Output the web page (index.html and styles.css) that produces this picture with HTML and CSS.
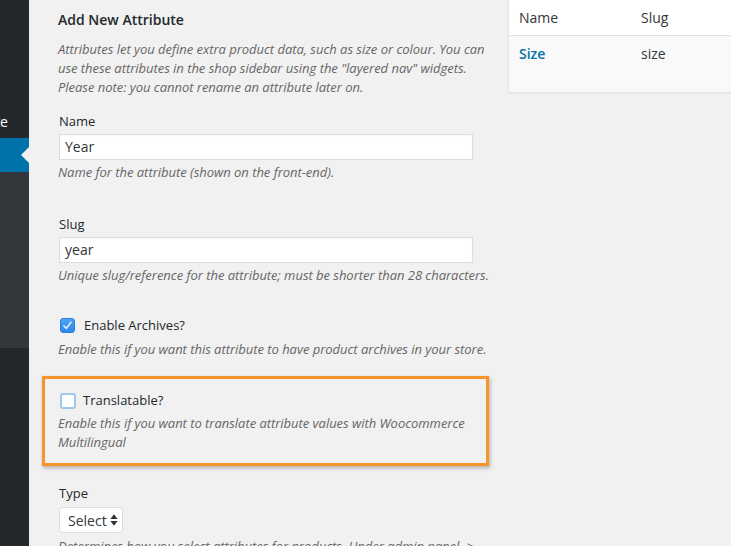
FILE: index.html
```html
<!DOCTYPE html>
<html lang="en">
<head>
<meta charset="utf-8">
<title>Attributes</title>
<link rel="stylesheet" href="styles.css">
</head>
<body>
<div class="page">
  <aside class="sidebar">
    <div class="menu-top"><span class="menu-text">Create</span></div>
    <div class="menu-current"><span class="notch"></span></div>
    <div class="submenu"></div>
    <div class="menu-rest"></div>
  </aside>
  <main class="content">
    <section class="form-col">
      <h2 class="title">Add New Attribute</h2>
      <p class="intro">Attributes let you define extra product data, such as size or colour. You can use these attributes in the shop sidebar using the "layered nav" widgets. Please note: you cannot rename an attribute later on.</p>

      <div class="field field-first">
        <label class="label">Name</label>
        <div class="input">Year</div>
        <p class="desc">Name for the attribute (shown on the front-end).</p>
      </div>

      <div class="field field-next">
        <label class="label">Slug</label>
        <div class="input">year</div>
        <p class="desc nowrap">Unique slug/reference for the attribute; must be shorter than 28 characters.</p>
      </div>

      <div class="field field-check">
        <div class="check-row"><span class="checkbox checked"><svg viewBox="0 0 16 16" width="15" height="15"><path d="M4.2 8.4 L6.8 11 L11.8 4.6" fill="none" stroke="#d8ecff" stroke-width="1.8" stroke-linecap="round" stroke-linejoin="round"/></svg></span><span class="check-label">Enable Archives?</span></div>
        <p class="desc">Enable this if you want this attribute to have product archives in your store.</p>
      </div>

      <div class="highlight">
        <div class="check-row"><span class="checkbox focus"></span><span class="check-label tight">Translatable?</span></div>
        <p class="desc">Enable this if you want to translate attribute values with Woocommerce Multilingual</p>
      </div>

      <div class="field field-type">
        <label class="label">Type</label>
        <div class="select"><span>Select</span><svg class="arrows" viewBox="0 0 8 12" width="8" height="12"><path d="M4 0.3 L7.6 5 L0.4 5 Z M4 11.7 L7.6 7 L0.4 7 Z" fill="#333"/></svg></div>
        <p class="desc nowrap">Determines how you select attributes for products. Under admin panel -&gt;</p>
      </div>
    </section>

    <section class="table-col">
      <div class="thead">
        <div class="cell c-name">Name</div>
        <div class="cell c-slug">Slug</div>
      </div>
      <div class="trow">
        <div class="cell c-name"><a class="link">Size</a></div>
        <div class="cell c-slug">size</div>
      </div>
    </section>
  </main>
</div>
</body>
</html>
```

FILE: styles.css
```css
html, body {
  margin: 0;
  padding: 0;
  background: #f1f1f1;
  overflow: hidden;
}

body {
  font-family: "Open Sans", "Liberation Sans", sans-serif;
  font-size: 13px;
  line-height: 19px;
  color: #23282d;
}

.page {
  display: flex;
  width: 731px;
  height: 546px;
  overflow: hidden;
}

/* Sidebar */
.sidebar {
  width: 29px;
  flex: none;
  display: flex;
  flex-direction: column;
  background: #23282d;
  overflow: hidden;
}

.menu-top {
  height: 138px;
  display: flex;
  align-items: flex-end;
  justify-content: flex-end;
  box-sizing: border-box;
}

.menu-text {
  color: #fff;
  font-size: 14px;
  line-height: 19px;
  margin-bottom: 7px;
  white-space: nowrap;
  margin-right: 21px;
}

.menu-current {
  height: 34px;
  background: #0073aa;
  position: relative;
}

.notch {
  position: absolute;
  right: 0;
  top: 9px;
  width: 0;
  height: 0;
  border-top: 8px solid transparent;
  border-bottom: 8px solid transparent;
  border-right: 8px solid #f1f1f1;
}

.submenu {
  height: 176px;
  background: #32373c;
}

.menu-rest {
  flex: 1;
  background: #23282d;
}

/* Content */
.content {
  flex: 1;
  display: flex;
  padding-left: 29px;
  gap: 19px;
  min-width: 0;
}

.form-col {
  width: 431px;
  flex: none;
}

.title {
  margin: 0;
  padding-top: 10px;
  font-size: 14px;
  line-height: 20px;
  font-weight: 600;
  color: #23282d;
}

.intro {
  margin: 10px 0 0;
  font-style: italic;
  color: #666;
  font-size: 13px;
  line-height: 19px;
  letter-spacing: -0.03px;
}

.field-first { margin-top: 15px; }
.field-next { margin-top: 33px; }
.field-check { margin-top: 31px; }
.field-type { margin-top: 18px; }

.label {
  display: block;
  padding-left: 1px;
  font-size: 13px;
  line-height: 19px;
  color: #23282d;
}

.input {
  margin: 3px 0 0 1px;
  width: 414px;
  height: 26px;
  box-sizing: border-box;
  background: #fff;
  border: 1px solid #ddd;
  box-shadow: inset 0 1px 2px rgba(0, 0, 0, 0.04);
  padding-left: 5px;
  font-size: 14px;
  line-height: 24px;
  color: #32373c;
}

.desc {
  margin: 3px 0 0;
  font-style: italic;
  color: #666;
  font-size: 13px;
  line-height: 19px;
  letter-spacing: -0.03px;
}

.nowrap { white-space: nowrap; }

.check-row {
  display: flex;
  align-items: center;
  height: 19px;
  padding-left: 2px;
}

.checkbox {
  width: 15px;
  height: 15px;
  box-sizing: border-box;
  border-radius: 3px;
  flex: none;
  display: flex;
  align-items: center;
  justify-content: center;
}

.checkbox.checked {
  background: linear-gradient(#4ea3f7, #2c87ec);
  border: 1px solid #2a7fd8;
}

.checkbox.checked svg {
  display: block;
  margin: -1px;
}

.checkbox.focus {
  width: 16px;
  height: 16px;
  background: #fff;
  border: 2px solid #9ec9ec;
  border-radius: 3px;
}

.check-label {
  margin-left: 9px;
  font-size: 13px;
  color: #23282d;
}

.check-label.tight { margin-left: 7px; }

.field-check .desc { margin-top: 5px; }

.highlight {
  margin: 17px 0 0 -16px;
  border: 3px solid #f7952a;
  box-shadow: 1px 2px 4px rgba(0, 0, 0, 0.28);
  padding: 12px 13px 11px 13px;
}

.highlight .desc { margin-top: 4px; }

.select {
  margin: 4px 0 0 1px;
  width: 64px;
  height: 26px;
  box-sizing: border-box;
  background: #fff;
  border: 1px solid #ddd;
  border-radius: 4px;
  display: flex;
  align-items: center;
  padding-left: 8px;
  font-size: 14px;
  color: #32373c;
}

.select .arrows {
  margin-left: 3px;
  display: block;
}

.field-type .desc { margin-top: 4px; }

/* Table */
.table-col {
  flex: 1;
  margin-right: -20px;
  align-self: flex-start;
  border-left: 1px solid #e5e5e5;
  border-bottom: 1px solid #e5e5e5;
  box-shadow: 0 1px 1px rgba(0, 0, 0, 0.04);
}

.thead, .trow {
  display: flex;
}

.thead {
  background: #fff;
  height: 36px;
  box-sizing: border-box;
  border-bottom: 1px solid #e1e1e1;
  align-items: center;
}

.trow {
  background: #f9f9f9;
  height: 56px;
  padding-top: 8px;
  box-sizing: border-box;
  align-items: flex-start;
}

.cell {
  font-size: 14px;
  line-height: 19px;
  color: #32373c;
}

.c-name {
  width: 122px;
  padding-left: 10px;
  flex: none;
}

.link {
  color: #0073aa;
  font-weight: 600;
  text-decoration: none;
}
```
